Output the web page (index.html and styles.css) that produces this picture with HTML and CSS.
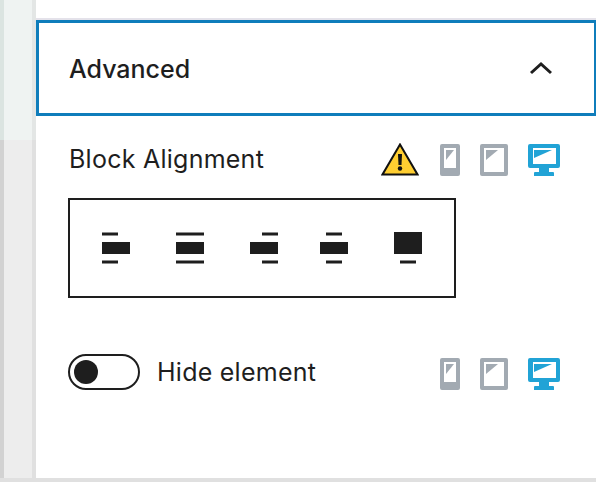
FILE: index.html
```html
<!DOCTYPE html>
<html lang="en">
<head>
    <meta charset="UTF-8">
    <title>Advanced</title>
    <link rel="stylesheet" href="styles.css">
</head>
<body>
    <svg class="defs" width="0" height="0">
        <symbol id="phone" viewBox="0 0 20 32">
            <path fill-rule="evenodd" d="M2 0h16a2 2 0 0 1 2 2v28a2 2 0 0 1-2 2H2a2 2 0 0 1-2-2V2a2 2 0 0 1 2-2zM4 4v20h12V4z"/>
            <path d="M6 6h8L6 16z"/>
        </symbol>
        <symbol id="tablet" viewBox="0 0 28 32">
            <path fill-rule="evenodd" d="M2 0h24a2 2 0 0 1 2 2v28a2 2 0 0 1-2 2H2a2 2 0 0 1-2-2V2a2 2 0 0 1 2-2zM4 4v24h20V4z"/>
            <path d="M6 6h12L6 16z"/>
        </symbol>
        <symbol id="desktop" viewBox="0 0 32 32">
            <path fill-rule="evenodd" d="M2 0h28a2 2 0 0 1 2 2v20a2 2 0 0 1-2 2H21v4h4a1 1 0 0 1 1 1v3H6v-3a1 1 0 0 1 1-1h4v-4H2a2 2 0 0 1-2-2V2a2 2 0 0 1 2-2zM5 4v16h23V4z"/>
            <path d="M6 6h18L6 14z"/>
        </symbol>
    </svg>

    <div class="page">
        <div class="rail">
            <div class="railTop"></div>
            <div class="railBottom"></div>
        </div>

        <div class="panel">
            <div class="panelHead">
                <h2>Advanced</h2>
                <svg class="chevron" width="24" height="14" viewBox="0 0 24 14">
                    <path d="M2 12l10-9 10 9" fill="none" stroke="#1e1e1e" stroke-width="3"/>
                </svg>
            </div>

            <div class="row alignRow">
                <span class="label">Block Alignment</span>
                <svg class="warn" width="38" height="34" viewBox="0 0 38 34">
                    <path d="M19 1.500L1.500 31.500h35z" fill="#ffce31" stroke="#111" stroke-width="2"/>
                    <path d="M17 11h4l-.5 11h-3z" fill="#111"/>
                    <circle cx="19" cy="25.500" r="2.200" fill="#111"/>
                </svg>
                <div class="devices">
                    <svg class="phone"><use href="#phone"/></svg>
                    <svg class="tablet"><use href="#tablet"/></svg>
                    <svg class="desktop"><use href="#desktop"/></svg>
                </div>
            </div>

            <div class="toolbar">
                <svg viewBox="0 0 48 48"><path d="M10 8.500h16v3H10zM10 18h28v12H10zM10 36.500h16v3H10z"/></svg>
                <svg viewBox="0 0 48 48"><path d="M10 8.500h28v3H10zM10 18h28v12H10zM10 36.500h28v3H10z"/></svg>
                <svg viewBox="0 0 48 48"><path d="M22 8.500h16v3H22zM10 18h28v12H10zM22 36.500h16v3H22z"/></svg>
                <svg viewBox="0 0 48 48"><path d="M12 8.500h16v3H12zM6 18h28v12H6zM12 36.500h16v3H12z"/></svg>
                <svg viewBox="0 0 48 48"><path d="M6 8h28v22H6zM12 36.500h16v3H12z"/></svg>
            </div>

            <div class="row hideRow">
                <span class="toggle"><span class="knob"></span></span>
                <span class="label">Hide element</span>
                <div class="devices">
                    <svg class="phone"><use href="#phone"/></svg>
                    <svg class="tablet"><use href="#tablet"/></svg>
                    <svg class="desktop"><use href="#desktop"/></svg>
                </div>
            </div>
        </div>
    </div>
</body>
</html>
```

FILE: styles.css
```css
body {
    margin: 0;
    font-family: "Inter", "Liberation Sans", sans-serif;
    color: #1e1e1e;
    background: #fff;
}

.defs {
    display: block;
}

.page {
    display: flex;
    height: 478px;
    border-bottom: 4px solid #e0e0e0;
}

.rail {
    width: 36px;
    display: flex;
    flex-direction: column;
}

.railTop {
    height: 140px;
    background: #eff3f2;
    border-left: 4px solid #dbe4e1;
    border-right: 4px solid #e3e6e5;
}

.railBottom {
    flex: 1;
    background: #ededed;
    border-left: 4px solid #d2d2d2;
    border-right: 4px solid #e0e0e0;
}

.panel {
    flex: 1;
    padding-top: 20px;
}

.panelHead {
    display: flex;
    align-items: center;
    justify-content: space-between;
    height: 96px;
    box-sizing: border-box;
    padding: 0 41px 0 30px;
    border: 3px solid #0f7dbb;
    border-right-width: 2px;
    box-shadow: 0 -2px 0 #e4e2ea;
}

.panelHead h2 {
    margin: 2px 0 0;
    font-size: 25px;
    font-weight: 500;
}

.label {
    font-size: 25px;
    letter-spacing: .25px;
}

.row {
    display: flex;
    align-items: center;
    padding-left: 32px;
}

.alignRow {
    height: 34px;
    margin-top: 27px;
    padding-left: 33px;
}

.alignRow .label {
    margin-bottom: 2px;
}

.warn {
    margin-left: auto;
    margin-right: 21px;
}

.devices {
    display: flex;
    gap: 20px;
    margin-right: 36px;
    fill: #a2aab2;
}

.devices svg {
    height: 32px;
}

.phone {
    width: 20px;
}

.tablet {
    width: 28px;
}

.desktop {
    width: 32px;
    fill: #21a3d6;
}

.toolbar {
    display: flex;
    gap: 26px;
    width: 388px;
    height: 100px;
    box-sizing: border-box;
    margin: 21px 0 0 32px;
    padding: 0 22px;
    align-items: center;
    border: 2px solid #1e1e1e;
    fill: #1e1e1e;
}

.toolbar svg {
    width: 48px;
    height: 48px;
    flex: none;
}

.hideRow {
    height: 36px;
    margin-top: 56px;
}

.hideRow .devices {
    margin-left: auto;
    margin-top: 4px;
}

.toggle {
    display: flex;
    align-items: center;
    width: 72px;
    height: 36px;
    box-sizing: border-box;
    padding-left: 4px;
    margin-right: 17px;
    border: 2px solid #1e1e1e;
    border-radius: 18px;
}

.knob {
    width: 24px;
    height: 24px;
    border-radius: 50%;
    background: #1e1e1e;
}
```
